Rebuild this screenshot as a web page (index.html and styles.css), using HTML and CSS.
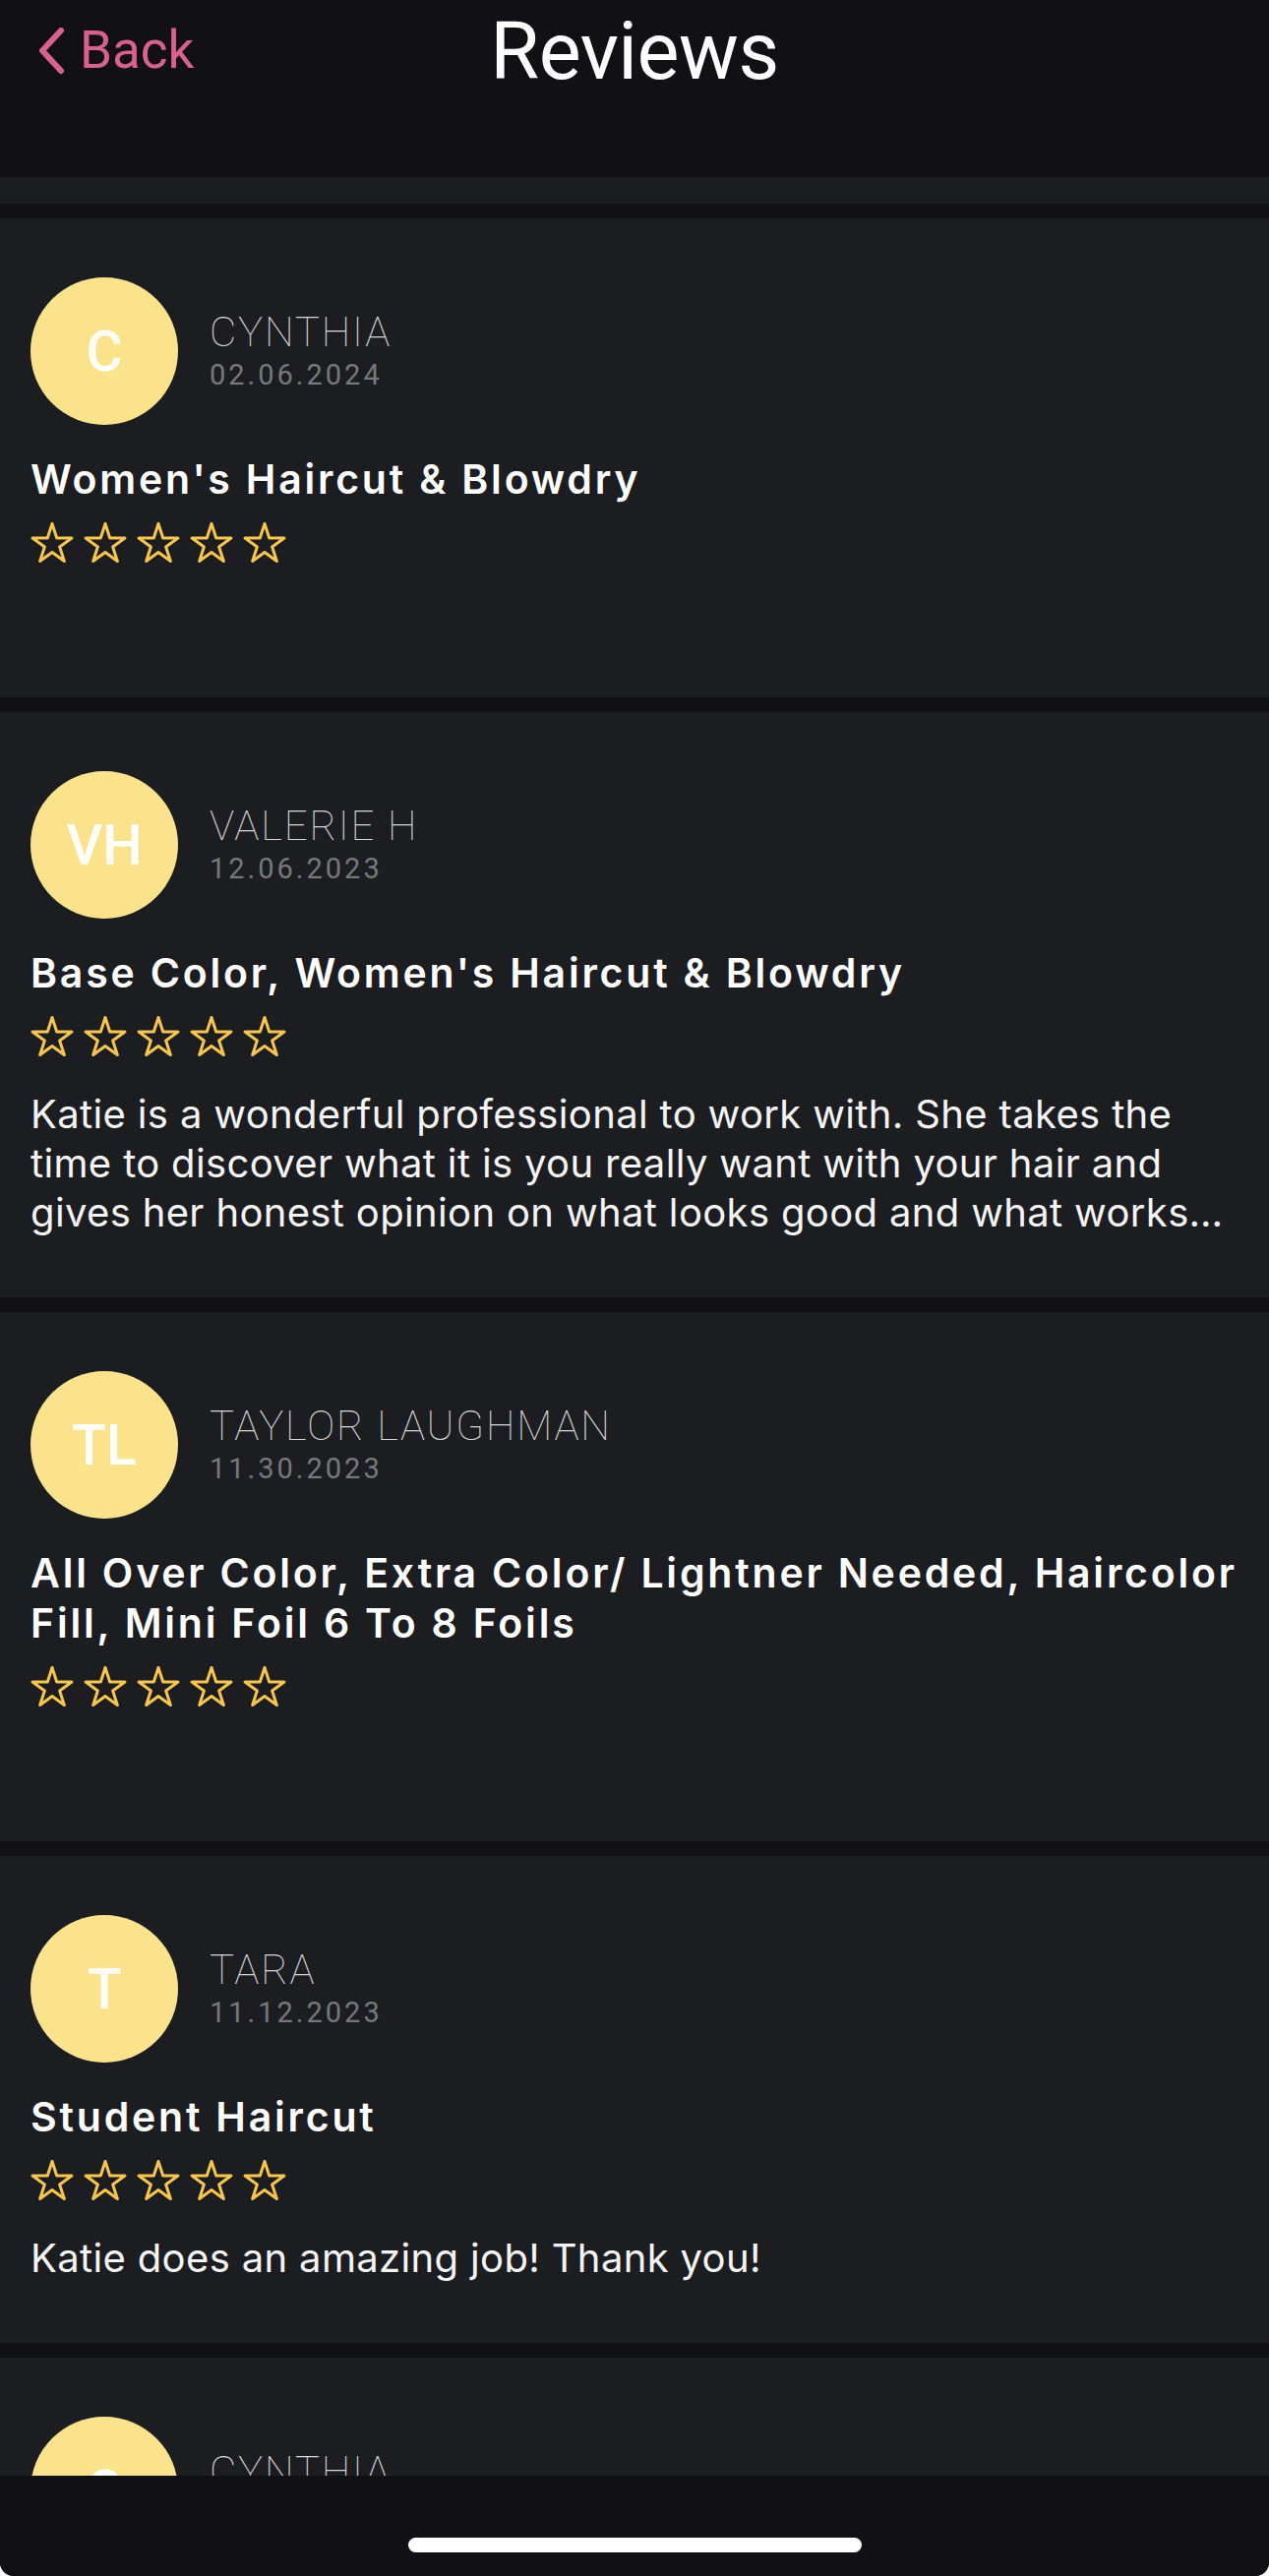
FILE: index.html
```html
<!DOCTYPE html>
<html lang="en">
<head>
<meta charset="utf-8">
<title>Reviews</title>
<link rel="stylesheet" href="styles.css">
</head>
<body>
<svg class="defs" width="0" height="0" aria-hidden="true">
  <defs>
    <symbol id="star" viewBox="0 0 44 41">
      <path d="M22 1.5 L26.71 16.01 L41.97 16.01 L29.63 24.98 L34.34 39.49 L22 30.52 L9.66 39.49 L14.37 24.98 L2.03 16.01 L17.29 16.01 Z" fill="none" stroke="#f7c64b" stroke-width="3" stroke-linejoin="round"/>
    </symbol>
  </defs>
</svg>
<div class="screen">
  <header class="header">
    <a class="back" href="#">
      <svg class="chev" width="30" height="48" viewBox="0 0 30 48"><path d="M25 3 L6 23.5 L25 44" fill="none" stroke="#d9618c" stroke-width="6" stroke-linecap="round" stroke-linejoin="round"/></svg>
      <span>Back</span>
    </a>
    <h1 class="title">Reviews</h1>
    <div class="spacer"></div>
  </header>

  <main class="list">
    <div class="stub"></div>

    <article class="card">
      <div class="author">
        <div class="avatar">C</div>
        <div class="meta">
          <div class="name">CYNTHIA</div>
          <div class="date">02.06.2024</div>
        </div>
      </div>
      <h2 class="service">Women's Haircut &amp; Blowdry</h2>
      <div class="stars">
        <svg><use href="#star"/></svg><svg><use href="#star"/></svg><svg><use href="#star"/></svg><svg><use href="#star"/></svg><svg><use href="#star"/></svg>
      </div>
      <p class="comment empty"></p>
    </article>

    <article class="card">
      <div class="author">
        <div class="avatar">VH</div>
        <div class="meta">
          <div class="name">VALERIE H</div>
          <div class="date">12.06.2023</div>
        </div>
      </div>
      <h2 class="service">Base Color, Women's Haircut &amp; Blowdry</h2>
      <div class="stars">
        <svg><use href="#star"/></svg><svg><use href="#star"/></svg><svg><use href="#star"/></svg><svg><use href="#star"/></svg><svg><use href="#star"/></svg>
      </div>
      <p class="comment clamp">Katie is a wonderful professional to work with. She takes the time to discover what it is you really want with your hair and gives her honest opinion on what looks good and what works best for your lifestyle and budget.</p>
    </article>

    <article class="card">
      <div class="author">
        <div class="avatar">TL</div>
        <div class="meta">
          <div class="name">TAYLOR LAUGHMAN</div>
          <div class="date">11.30.2023</div>
        </div>
      </div>
      <h2 class="service">All Over Color, Extra Color/ Lightner Needed, Haircolor Fill, Mini Foil 6 To 8 Foils</h2>
      <div class="stars">
        <svg><use href="#star"/></svg><svg><use href="#star"/></svg><svg><use href="#star"/></svg><svg><use href="#star"/></svg><svg><use href="#star"/></svg>
      </div>
      <p class="comment empty"></p>
    </article>

    <article class="card">
      <div class="author">
        <div class="avatar">T</div>
        <div class="meta">
          <div class="name">TARA</div>
          <div class="date">11.12.2023</div>
        </div>
      </div>
      <h2 class="service">Student Haircut</h2>
      <div class="stars">
        <svg><use href="#star"/></svg><svg><use href="#star"/></svg><svg><use href="#star"/></svg><svg><use href="#star"/></svg><svg><use href="#star"/></svg>
      </div>
      <p class="comment">Katie does an amazing job! Thank you!</p>
    </article>

    <article class="card">
      <div class="author">
        <div class="avatar">C</div>
        <div class="meta">
          <div class="name">CYNTHIA</div>
          <div class="date">01.20.2023</div>
        </div>
      </div>
      <h2 class="service">Women's Haircut &amp; Blowdry</h2>
    </article>
  </main>

  <footer class="homebar">
    <div class="indicator"></div>
  </footer>
</div>
</body>
</html>
```

FILE: styles.css
```css
* { box-sizing: border-box; }

html, body {
  margin: 0;
  padding: 0;
  background: #ffffff;
}

.defs { position: absolute; width: 0; height: 0; }

.screen {
  width: 1290px;
  height: 2619px;
  display: flex;
  flex-direction: column;
  background: #111115;
  border-radius: 0 0 14px 14px;
  overflow: hidden;
  font-family: Roboto, "Noto Sans", "Liberation Sans", sans-serif;
}

/* Header */
.header {
  flex: none;
  height: 180px;
  display: grid;
  grid-template-columns: 1fr auto 1fr;
  align-items: start;
  padding-top: 12px;
  background: #111115;
}

.back {
  display: flex;
  align-items: center;
  gap: 14px;
  margin-top: 13px;
  padding-left: 37px;
  color: #d9618c;
  text-decoration: none;
  font-size: 53px;
  line-height: 53px;
  font-weight: 400;
  justify-self: start;
}

.chev { flex: none; }

.title {
  margin: 0;
  color: #ffffff;
  font-size: 81px;
  line-height: 81px;
  font-weight: 400;
  letter-spacing: -0.5px;
}

/* List */
.list {
  flex: 1;
  min-height: 0;
  overflow: hidden;
  display: flex;
  flex-direction: column;
  gap: 15px;
}

.stub {
  flex: none;
  height: 27px;
  background: #1c1d21;
}

.card {
  flex: none;
  background: #1c1d21;
  padding: 60px 24px 61px 31px;
}

.author {
  display: flex;
  align-items: center;
  gap: 32px;
}

.avatar {
  flex: none;
  width: 150px;
  height: 150px;
  border-radius: 50%;
  background: #fbe38c;
  color: #ffffff;
  display: flex;
  align-items: center;
  justify-content: center;
  font-size: 57px;
  font-weight: 500;
}

.meta {
  display: flex;
  flex-direction: column;
}

.name {
  color: #d6d6d8;
  font-size: 42px;
  line-height: 44px;
  font-weight: 100;
  letter-spacing: 1.8px;
}

.date {
  color: #76787d;
  font-size: 29px;
  line-height: 36px;
  margin-top: 3px;
  font-weight: 400;
  letter-spacing: 3px;
}

.service {
  margin: 30px 0 0 0;
  color: #ffffff;
  font-family: Inter, Roboto, "Noto Sans", sans-serif;
  font-size: 41px;
  line-height: 51px;
  font-weight: 600;
  letter-spacing: 2.8px;
}

.stars {
  display: flex;
  gap: 10px;
  margin-top: 18px;
  height: 41px;
}

.stars svg {
  width: 44px;
  height: 41px;
  flex: none;
}

.comment {
  margin: 34px 0 0 0;
  color: #f4f4f5;
  font-family: Inter, Roboto, "Noto Sans", sans-serif;
  font-size: 40px;
  line-height: 50px;
  font-weight: 400;
  letter-spacing: 0.35px;
}

.comment.empty { height: 42px; }

.comment.clamp {
  display: -webkit-box;
  -webkit-box-orient: vertical;
  -webkit-line-clamp: 3;
  overflow: hidden;
}

/* Home indicator bar */
.homebar {
  flex: none;
  height: 102px;
  background: #111115;
  display: flex;
  justify-content: center;
  padding-top: 63px;
}

.indicator {
  width: 461px;
  height: 15px;
  border-radius: 8px;
  background: #ffffff;
}
```
